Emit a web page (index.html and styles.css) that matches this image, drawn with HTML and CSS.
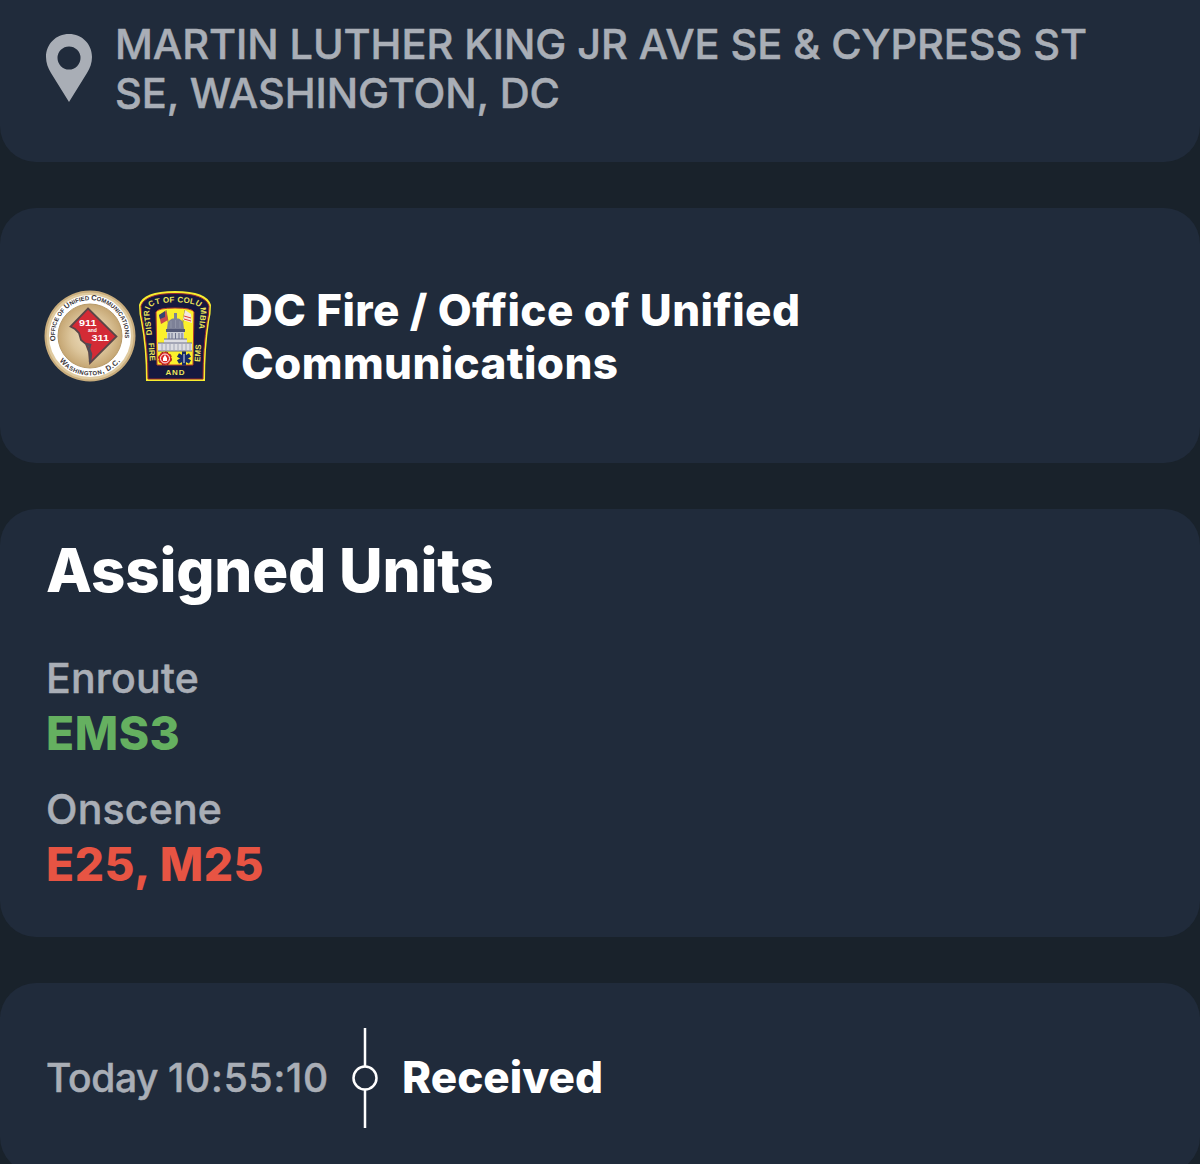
FILE: index.html
```html
<!DOCTYPE html>
<html lang="en">
<head>
    <meta charset="UTF-8">
    <meta name="viewport" content="width=device-width, initial-scale=1.0">
    <title>Incident Details</title>
    <link rel="stylesheet" href="styles.css">
</head>
<body>
    <div class="card address">
        <svg class="pin" viewBox="0 0 48 70">
            <path fill-rule="evenodd" d="M24 1C11 1 1 11 1 24c0 6 2 11 5 16l18 29 18-29c3-5 5-10 5-16C47 11 37 1 24 1zM24 13.500a11.500 11.500 0 1 1 0 23 11.500 11.500 0 0 1 0-23z"/>
        </svg>
        <p>MARTIN LUTHER KING JR AVE SE &amp; CYPRESS ST<br>SE, WASHINGTON, DC</p>
    </div>

    <div class="card agency">
        <svg class="seal" viewBox="0 0 92 92">
            <defs>
                <radialGradient id="gold">
                    <stop offset="0" stop-color="#efe0c2"/>
                    <stop offset="0.6" stop-color="#dcc59b"/>
                    <stop offset="1" stop-color="#c5a673"/>
                </radialGradient>
                <path id="seal-top" d="M11.500 51A35 35 0 1 1 80.500 51"/>
                <path id="seal-bottom" d="M6.500 46A39.500 39.500 0 0 0 85.500 46"/>
            </defs>
            <circle cx="46" cy="46" r="45.500" fill="#c9ad7d"/>
            <circle cx="46" cy="46" r="43.500" fill="#dfca9f"/>
            <circle cx="46" cy="46" r="41" fill="#fff"/>
            <circle cx="46" cy="46" r="32" fill="url(#gold)" stroke="#b89a68"/>
            <path d="M44 18.500L72.500 46.500 46 73 45 62 42 54 37 50 35 43 31 39 26.500 36.500z" fill="#d32b35" stroke="#5a4548" stroke-width="1.800"/>
            <path d="M42 54l4 1-1 4 2 5-1 8" fill="none" stroke="#4d4b58" stroke-width="2.500"/>
            <g class="seal-num">
                <text x="35" y="35.500" textLength="17.500" lengthAdjust="spacingAndGlyphs">911</text>
                <text class="seal-and" x="44" y="41.500">and</text>
                <text x="47.500" y="50.500" textLength="17.500" lengthAdjust="spacingAndGlyphs">311</text>
            </g>
            <text class="seal-text"><textPath href="#seal-top">O<tspan class="sm">FFICE OF </tspan>U<tspan class="sm">NIFIED </tspan>C<tspan class="sm">OMMUNICATIONS</tspan></textPath></text>
            <text class="seal-text wide"><textPath href="#seal-bottom" startOffset="50%" text-anchor="middle">W<tspan class="sm">ASHINGTON</tspan>, D.C.</textPath></text>
        </svg>
        <svg class="patch" viewBox="0 0 74 92">
            <defs>
                <path id="patch-top" d="M14 45L11.500 24Q10.500 16.500 18 14.500 37 10 56 14.500 63.500 16.500 62.500 24L60 46"/>
            </defs>
            <path d="M1 15Q5 1 37 1T73 15Q73 24 71 32 67 58 67 91H8Q8 58 3 32 1 24 1 15z" fill="#f7ed2f"/>
            <path d="M3 16Q7 3.500 37 3.500T71 16Q71 24 69 32 65 58 65 89H10Q10 58 5 32 3 24 3 16z" fill="#16183f" stroke="#9c2530"/>
            <path d="M18 22Q20 18 37 18T56 22L55 75H19z" fill="#fbf02c" stroke="#b63a2c"/>
            <!-- flags -->
            <path d="M28 20l3 17M47 20l-3 17" stroke="#776b45" stroke-width=".8"/>
            <path d="M28 21l-7 4 2 9 7-4z" fill="#c94a4d"/>
            <path d="M27 21l-6 4 1 4 5-2z" fill="#35456f"/>
            <path d="M47 20l6 4 1 9-9-3z" fill="#f3e8de"/>
            <path d="M46 26l7 2M46 29l7 2" stroke="#dc3d3a"/>
            <!-- capitol dome -->
            <path d="M36 23h3v6h-3zM29 39q0-11 8.500-11T46 39z" fill="#7d8197"/>
            <path d="M28 39h19v3H28z" fill="#535976"/>
            <path d="M29 42h17v8H29z" fill="#c8cbd5"/>
            <path d="M26 49h23v4H26zM20 53h34v8H20z" fill="#dddde1"/>
            <path d="M26 49h23M20 53h34M20 61h34M31 43v6M34 43v6M37.500 43v6M41 43v6M44 43v6" stroke="#6c718c" fill="none"/>
            <path d="M24 54v6M28 54v6M32 54v6M36 54v6M40 54v6M44 54v6M48 54v6M52 54v6M33 31v7M37.500 30v8M42 31v7" stroke="#9699ab" stroke-width=".8"/>
            <!-- fire and medical emblems -->
            <circle cx="27" cy="68.500" r="6.500" fill="#d92525" stroke="#8d2422" stroke-dasharray="3 2"/>
            <circle cx="27" cy="68.500" r="4.500" fill="none" stroke="#fff"/>
            <path d="M25 71v-3l2-3 2 3v3z" fill="#fff"/>
            <path d="M46 61.500v14M40 65l12 7M52 65l-12 7" stroke="#172c68" stroke-width="4"/>
            <path d="M46 64v9" stroke="#dce4f0"/>
            <g class="patch-text">
                <text><textPath href="#patch-top" textLength="100">DISTRICT OF COLUMBIA</textPath></text>
                <text transform="translate(10.500 53) rotate(86)">FIRE</text>
                <text transform="translate(62 72) rotate(-86)">EMS</text>
                <text x="37" y="85" text-anchor="middle" textLength="19">AND</text>
            </g>
        </svg>
        <h2>DC Fire / Office of Unified Communications</h2>
    </div>

    <div class="card units">
        <h1>Assigned Units</h1>
        <div class="unit-group">
            <div class="label">Enroute</div>
            <div class="value enroute">EMS3</div>
        </div>
        <div class="unit-group">
            <div class="label">Onscene</div>
            <div class="value onscene">E25, M25</div>
        </div>
    </div>

    <div class="card timeline">
        <span class="time">Today <span class="clock">10:55:10</span></span>
        <svg class="marker" viewBox="0 0 26 100">
            <path d="M13 0v38M13 62v38"/>
            <circle cx="13" cy="50" r="11.500"/>
        </svg>
        <span class="status">Received</span>
    </div>
</body>
</html>
```
FILE: styles.css
```css
* {
    box-sizing: border-box;
}
body {
    margin: 0;
    height: 1164px;
    overflow: hidden;
    background: #19222b;
    color: #fff;
    font-family: Inter, "Liberation Sans", sans-serif;
    display: flex;
    flex-direction: column;
    gap: 46px;
}
h1, h2, p {
    margin: 0;
}
.card {
    flex: none;
    background: #202b3b;
    border-radius: 36px;
    padding: 0 46px;
}
.address p, .label, .time {
    color: #a9aeb6;
    font-weight: 500;
    -webkit-text-stroke: 0.5px #a9aeb6;
}
.address {
    height: 162px;
    display: flex;
    align-items: flex-start;
    gap: 22px;
    padding-top: 20px;
    border-radius: 0 0 36px 36px;
}
.address p {
    font-size: 41.5px;
    line-height: 49px;
    letter-spacing: -0.07px;
    white-space: nowrap;
}
.pin {
    width: 48px;
    height: 70px;
    margin: 13px 0 0 -1px;
    fill: #a9aeb6;
}
.agency {
    height: 255px;
    display: flex;
    align-items: center;
    padding-left: 44px;
}
.seal {
    width: 92px;
    height: 92px;
}
.patch {
    width: 74px;
    height: 92px;
    margin: 0 29px 0 2px;
}
.agency h2 {
    width: 600px;
    padding-top: 2px;
    font-size: 44px;
    font-weight: 800;
    line-height: 53px;
    letter-spacing: 0.38px;
}
.seal-text {
    font: bold 7.5px "Liberation Sans", sans-serif;
    fill: #3b3536;
}
.seal-text .sm {
    font-size: 6px;
}
.seal-text.wide {
    letter-spacing: 0.5px;
}
.seal-num {
    font: bold 9.5px "Liberation Sans", sans-serif;
    fill: #fff;
}
.seal-num .seal-and {
    font-size: 5px;
}
.patch-text {
    font: bold 8px "Liberation Sans", sans-serif;
    fill: #ece65a;
}
.units {
    height: 428px;
    padding-top: 25px;
}
.units h1 {
    font-size: 60px;
    font-weight: 800;
    line-height: 72px;
    letter-spacing: -0.2px;
    margin-bottom: 47px;
}
.label {
    font-size: 41px;
    line-height: 50px;
    letter-spacing: 0.2px;
}
.value {
    font-size: 46px;
    font-weight: 800;
    line-height: 56px;
    letter-spacing: 0.6px;
    margin: 2px 0 23px;
}
.enroute {
    color: #65b060;
}
.onscene {
    color: #e75443;
}
.timeline {
    height: 190px;
    display: flex;
    align-items: center;
    padding-bottom: 1px;
}
.time {
    font-size: 39px;
    letter-spacing: -0.4px;
}
.clock {
    letter-spacing: 0.8px;
}
.marker {
    width: 26px;
    height: 100px;
    margin: 0 24px 0 23px;
    fill: none;
    stroke: #fff;
    stroke-width: 2.5;
}
.status {
    padding-bottom: 1px;
    font-size: 44px;
    font-weight: 800;
}
```
